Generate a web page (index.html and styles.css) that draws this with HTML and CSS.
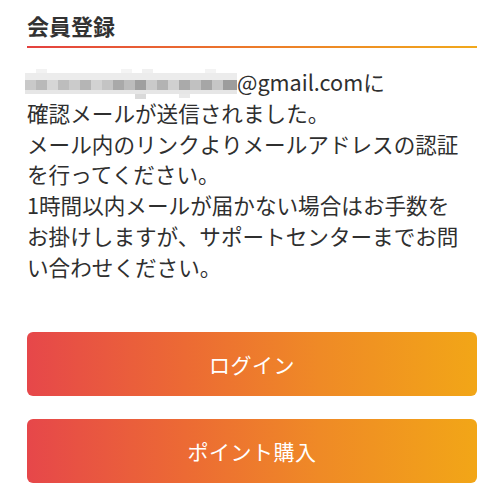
FILE: index.html
```html
<!DOCTYPE html>
<html lang="ja">
<head>
<meta charset="utf-8">
<title>会員登録</title>
<link rel="stylesheet" href="styles.css">
</head>
<body>
<main class="page">
  <h1 class="title">会員登録</h1>
  <p class="message"><span class="masked"><svg class="mosaic" width="212" height="30" viewBox="0 0 212 30" aria-hidden="true">
    <rect x="0" y="0" width="212" height="30" fill="#ffffff"/>
    <rect x="0" y="4" width="212" height="7" fill="#ececec"/>
    <rect x="11" y="0" width="11" height="4" fill="#f2f2f2"/>
    <rect x="96" y="0" width="11" height="4" fill="#f4f4f4"/>
    <rect x="117" y="0" width="11" height="4" fill="#f0f0f0"/>
    <rect x="180" y="0" width="11" height="4" fill="#f3f3f3"/>
    <rect x="0" y="11" width="212" height="10" fill="#cfcfcf"/>
    <rect x="0" y="11" width="11" height="10" fill="#c9c9c9"/>
    <rect x="11" y="11" width="11" height="10" fill="#b9b9b9"/>
    <rect x="22" y="11" width="11" height="10" fill="#d6d6d6"/>
    <rect x="33" y="11" width="11" height="10" fill="#bdbdbd"/>
    <rect x="44" y="11" width="11" height="10" fill="#cbcbcb"/>
    <rect x="55" y="11" width="11" height="10" fill="#b5b5b5"/>
    <rect x="66" y="11" width="11" height="10" fill="#d2d2d2"/>
    <rect x="77" y="11" width="11" height="10" fill="#c4c4c4"/>
    <rect x="88" y="11" width="11" height="10" fill="#a9a9a9"/>
    <rect x="99" y="11" width="11" height="10" fill="#bcbcbc"/>
    <rect x="110" y="11" width="11" height="10" fill="#9f9f9f"/>
    <rect x="121" y="11" width="11" height="10" fill="#cacaca"/>
    <rect x="132" y="11" width="11" height="10" fill="#b3b3b3"/>
    <rect x="143" y="11" width="11" height="10" fill="#d0d0d0"/>
    <rect x="154" y="11" width="11" height="10" fill="#aaaaaa"/>
    <rect x="165" y="11" width="11" height="10" fill="#c1c1c1"/>
    <rect x="176" y="11" width="11" height="10" fill="#a6a6a6"/>
    <rect x="187" y="11" width="11" height="10" fill="#c6c6c6"/>
    <rect x="198" y="11" width="14" height="10" fill="#9d9d9d"/>
    <rect x="0" y="21" width="212" height="4" fill="#e6e6e6"/>
    <rect x="110" y="25" width="11" height="5" fill="#d9d9d9"/>
    <rect x="154" y="25" width="11" height="4" fill="#e9e9e9"/>
  </svg></span>@gmail.comに<br>確認メールが送信されました。<br>メール内のリンクよりメールアドレスの認証<br>を行ってください。<br>1時間以内メールが届かない場合はお手数を<br>お掛けしますが、サポートセンターまでお問<br>い合わせください。</p>
  <div class="actions">
    <a class="btn" href="#">ログイン</a>
    <a class="btn" href="#">ポイント購入</a>
  </div>
</main>
</body>
</html>
```
FILE: styles.css
```css
html, body {
  margin: 0;
  padding: 0;
  background: #ffffff;
}

body {
  font-family: "Noto Sans CJK JP", "Noto Sans", sans-serif;
  color: #333333;
}

.page {
  width: 450px;
  margin: 0 0 0 27px;
  padding-top: 10px;
}

.title {
  margin: 0;
  font-size: 22px;
  line-height: 31px;
  font-weight: 700;
  color: #333333;
  padding-bottom: 5px;
  border-bottom: 2px solid transparent;
  border-image: linear-gradient(90deg, #e4403f 0%, #ec7a2a 50%, #f1a91c 100%) 1;
}

.message {
  margin: 19px 0 0 0;
  font-size: 21.6px;
  line-height: 30.8px;
  white-space: nowrap;
  color: #2f2f2f;
}

.masked {
  display: inline-block;
  width: 212px;
  height: 22px;
  vertical-align: -4px;
  margin-left: -2px;
  position: relative;
}

.mosaic {
  position: absolute;
  left: 0;
  top: -4px;
  display: block;
}

.actions {
  display: flex;
  flex-direction: column;
  gap: 23px;
  margin-top: 49px;
}

.btn {
  display: flex;
  align-items: center;
  justify-content: center;
  height: 64px;
  border-radius: 6px;
  background: linear-gradient(90deg, #e6474a 0%, #ec6a34 35%, #ef8a26 65%, #f2a617 100%);
  color: #ffffff;
  font-size: 21px;
  font-weight: 400;
  text-decoration: none;
  letter-spacing: 0.5px;
}
```
